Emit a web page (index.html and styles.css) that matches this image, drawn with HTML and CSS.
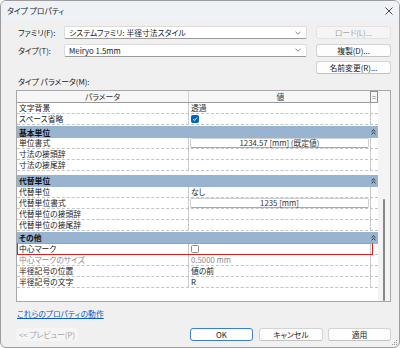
FILE: index.html
```html
<!DOCTYPE html>
<html lang="ja">
<head>
    <meta charset="UTF-8">
    <title>タイプ プロパティ</title>
    <link rel="stylesheet" href="styles.css">
</head>
<body>
<div class="window">
    <div class="titlebar">
        <span>タイプ プロパティ</span>
        <svg class="close" width="8" height="8" viewBox="0 0 8 8"><path d="M0.5 0.5L7.5 7.5M7.5 0.5L0.5 7.5" stroke="#333" stroke-width="0.9"/></svg>
    </div>

    <div class="content">
        <div class="top-grid">
            <div class="lbl">ファミリ(F):</div>
            <div class="combo"><span>システムファミリ: 半径寸法スタイル</span><svg width="6" height="4" viewBox="0 0 6 4"><path d="M0.5 0.8L3 3.2L5.5 0.8" fill="none" stroke="#666" stroke-width="0.8"/></svg></div>
            <div class="btn disabled">ロード(L)...</div>

            <div class="lbl">タイプ(T):</div>
            <div class="combo"><span>Meiryo 1.5mm</span><svg width="6" height="4" viewBox="0 0 6 4"><path d="M0.5 0.8L3 3.2L5.5 0.8" fill="none" stroke="#666" stroke-width="0.8"/></svg></div>
            <div class="btn">複製(D)...</div>

            <div class="btn col3">名前変更(R)...</div>
        </div>

        <div class="section-label">タイプ パラメータ(M):</div>

        <div class="frame">
            <div class="grid">
                <div class="row head">
                    <div class="c1">パラメータ</div>
                    <div class="c2">値</div>
                    <div class="c3">=</div>
                </div>

                <div class="row"><div class="c1">文字背景</div><div class="c2">透過</div><div class="c3"></div></div>
                <div class="row"><div class="c1">スペース省略</div><div class="c2"><span class="check on"><svg width="6" height="6" viewBox="0 0 6 6"><path d="M1 3.2L2.4 4.5L5 1.6" fill="none" stroke="#fff" stroke-width="0.9"/></svg></span></div><div class="c3"></div></div>

                <div class="group g1"><span>基本単位</span><svg width="5" height="6" viewBox="0 0 5 6"><path d="M0.6 2.6L2.5 0.8L4.4 2.6M0.6 5.2L2.5 3.4L4.4 5.2" fill="none" stroke="#222" stroke-width="0.9"/></svg></div>
                <div class="row"><div class="c1">単位書式</div><div class="c2"><span class="field">1234.57 [mm] (既定値)</span></div><div class="c3"></div></div>
                <div class="row"><div class="c1">寸法の接頭辞</div><div class="c2"></div><div class="c3"></div></div>
                <div class="row"><div class="c1">寸法の接尾辞</div><div class="c2"></div><div class="c3"></div></div>

                <div class="group g2"><span>代替単位</span><svg width="5" height="6" viewBox="0 0 5 6"><path d="M0.6 2.6L2.5 0.8L4.4 2.6M0.6 5.2L2.5 3.4L4.4 5.2" fill="none" stroke="#222" stroke-width="0.9"/></svg></div>
                <div class="row"><div class="c1">代替単位</div><div class="c2">なし</div><div class="c3"></div></div>
                <div class="row"><div class="c1">代替単位書式</div><div class="c2"><span class="field">1235 [mm]</span></div><div class="c3"></div></div>
                <div class="row"><div class="c1">代替単位の接頭辞</div><div class="c2"></div><div class="c3"></div></div>
                <div class="row"><div class="c1">代替単位の接尾辞</div><div class="c2"></div><div class="c3"></div></div>

                <div class="group g3"><span>その他</span><svg width="5" height="6" viewBox="0 0 5 6"><path d="M0.6 2.6L2.5 0.8L4.4 2.6M0.6 5.2L2.5 3.4L4.4 5.2" fill="none" stroke="#222" stroke-width="0.9"/></svg></div>
                <div class="row marked"><div class="c1">中心マーク</div><div class="c2"><span class="check"></span></div><div class="c3"></div></div>
                <div class="row dim"><div class="c1">中心マークのサイズ</div><div class="c2">0.5000 mm</div><div class="c3"></div></div>
                <div class="row"><div class="c1">半径記号の位置</div><div class="c2">値の前</div><div class="c3"></div></div>
                <div class="row"><div class="c1">半径記号の文字</div><div class="c2">R</div><div class="c3"></div></div>
            </div>
            <div class="scroll"><div class="thumb"></div></div>
        </div>

        <a class="link" href="#">これらのプロパティの動作</a>

        <div class="buttons">
            <div class="btn disabled flat preview">&lt;&lt; プレビュー(P)</div>
            <div class="btn default ok">OK</div>
            <div class="btn cancel">キャンセル</div>
            <div class="btn apply">適用</div>
        </div>
    </div>

    <svg class="grip" width="7" height="7" viewBox="0 0 7 7">
        <rect x="5" y="1" width="1" height="1" fill="#999"/>
        <rect x="3" y="3" width="1" height="1" fill="#999"/>
        <rect x="5" y="3" width="1" height="1" fill="#999"/>
        <rect x="1" y="5" width="1" height="1" fill="#999"/>
        <rect x="3" y="5" width="1" height="1" fill="#999"/>
        <rect x="5" y="5" width="1" height="1" fill="#999"/>
    </svg>
</div>
</body>
</html>
```

FILE: styles.css
```css
* {
    box-sizing: border-box;
}
body {
    margin: 0;
    font-family: "Noto Sans CJK JP", "Noto Sans", sans-serif;
    font-size: 7.8px;
    font-feature-settings: "palt";
    color: #1a1a1a;
    background: #fff;
}
.window {
    position: relative;
    width: 400px;
    height: 348px;
    border: 1px solid #9c9c9c;
    border-radius: 6px;
    background: #f0f0f0;
    overflow: hidden;
}
.titlebar {
    height: 19px;
    padding: 0 6px 0 6px;
    display: flex;
    align-items: center;
    justify-content: space-between;
    background: #eef1f6;
    color: #222;
}
.content {
    padding: 6px 8px 0 15px;
}
.top-grid {
    display: grid;
    grid-template-columns: 39px 243px 75px;
    grid-auto-rows: 13px;
    column-gap: 9px;
    row-gap: 4.5px;
    align-items: center;
}
.lbl {
    padding-left: 2px;
    white-space: nowrap;
}
.combo {
    height: 13px;
    display: flex;
    align-items: center;
    justify-content: space-between;
    padding: 0 5px 0 4px;
    background: #fff;
    border: 1px solid #dcdcdc;
    border-bottom-color: #9a9a9a;
    border-radius: 2px;
}
.btn {
    height: 13px;
    display: flex;
    align-items: center;
    justify-content: center;
    background: #fdfdfd;
    border: 1px solid #d3d3d3;
    border-bottom-color: #c2c2c2;
    border-radius: 3px;
}
.btn.disabled {
    background: #f5f5f5;
    border-color: #e3e3e3;
    color: #a3a3a3;
}
.btn.flat {
    border-color: #f5f5f5;
}
.col3 {
    grid-column: 3;
}
.section-label {
    margin-top: 3px;
    line-height: 10px;
    padding-left: 2px;
}
.frame {
    margin-top: 2.5px;
    width: 375px;
    height: 212px;
    display: flex;
    border: 1px solid #a8a8a8;
    background: #fff;
}
.grid {
    width: 361px;
    display: flex;
    flex-direction: column;
}
.row {
    position: relative;
    height: 11px;
    display: flex;
    line-height: 10px;
    border-bottom: 1px dashed #c4c4c4;
}
.row .c1 {
    width: 172px;
    padding-left: 2px;
    border-right: 1px dashed #c4c4c4;
}
.row .c2 {
    width: 181px;
    padding-left: 2px;
    display: flex;
    align-items: center;
}
.row .c3 {
    width: 8px;
    border-left: 1px dashed #c4c4c4;
}
.row.head {
    height: 12px;
    background: #f6f6f6;
    border-bottom: 1px solid #9a9a9a;
    line-height: 11px;
    color: #333;
}
.row.head .c1 {
    border-right: 1px solid #d0d0d0;
    text-align: center;
    padding-left: 0;
}
.row.head .c2 {
    justify-content: center;
}
.row.head .c3 {
    border: 1px solid #8c8c8c;
    border-bottom: none;
    text-align: center;
    color: #777;
    font-size: 7px;
}
.group {
    height: 12px;
    display: flex;
    align-items: center;
    justify-content: space-between;
    padding: 0 2px 0 2px;
    background: #99b4d1;
    font-weight: bold;
    color: #111;
}
.g1 {
    margin-top: 1.5px;
}
.g2 {
    margin-top: 3.5px;
}
.g3 {
    margin-top: 1px;
}
.field {
    width: 179px;
    height: 10px;
    margin-left: -1px;
    display: flex;
    align-items: center;
    justify-content: center;
    border: 1px solid #cfcfcf;
    border-bottom-color: #a9a9a9;
    border-radius: 2px;
    background: #fff;
    color: #333;
}
.check {
    width: 8px;
    height: 8px;
    display: flex;
    align-items: center;
    justify-content: center;
    border: 1px solid #8a8a8a;
    border-radius: 1.5px;
    background: #fff;
}
.check.on {
    background: #0067c0;
    border-color: #0067c0;
}
.row.marked::after {
    content: "";
    position: absolute;
    left: 0;
    top: -1px;
    bottom: -1px;
    right: 5px;
    border: 1px solid #e21b1b;
    border-top-color: #f07c7c;
}
.row.dim {
    color: #8c8c8c;
}
.scroll {
    width: 12px;
    padding-top: 108px;
    display: flex;
    justify-content: center;
    background: #f4f4f4;
}
.thumb {
    width: 2px;
    height: 102px;
    border-radius: 1px;
    background: #878787;
}
.link {
    display: inline-block;
    margin-top: 7px;
    margin-left: 1px;
    line-height: 10px;
    color: #0a5cc4;
    text-decoration: underline;
}
.buttons {
    margin-top: 9px;
    display: flex;
}
.preview {
    width: 62px;
}
.ok {
    margin-left: auto;
    width: 63px;
}
.btn.default {
    border: 1px solid #3c7fd0;
}
.cancel {
    margin-left: 6px;
    width: 64px;
}
.apply {
    margin-left: 5px;
    width: 63px;
}
.grip {
    position: absolute;
    right: 1px;
    bottom: 1px;
}
```
